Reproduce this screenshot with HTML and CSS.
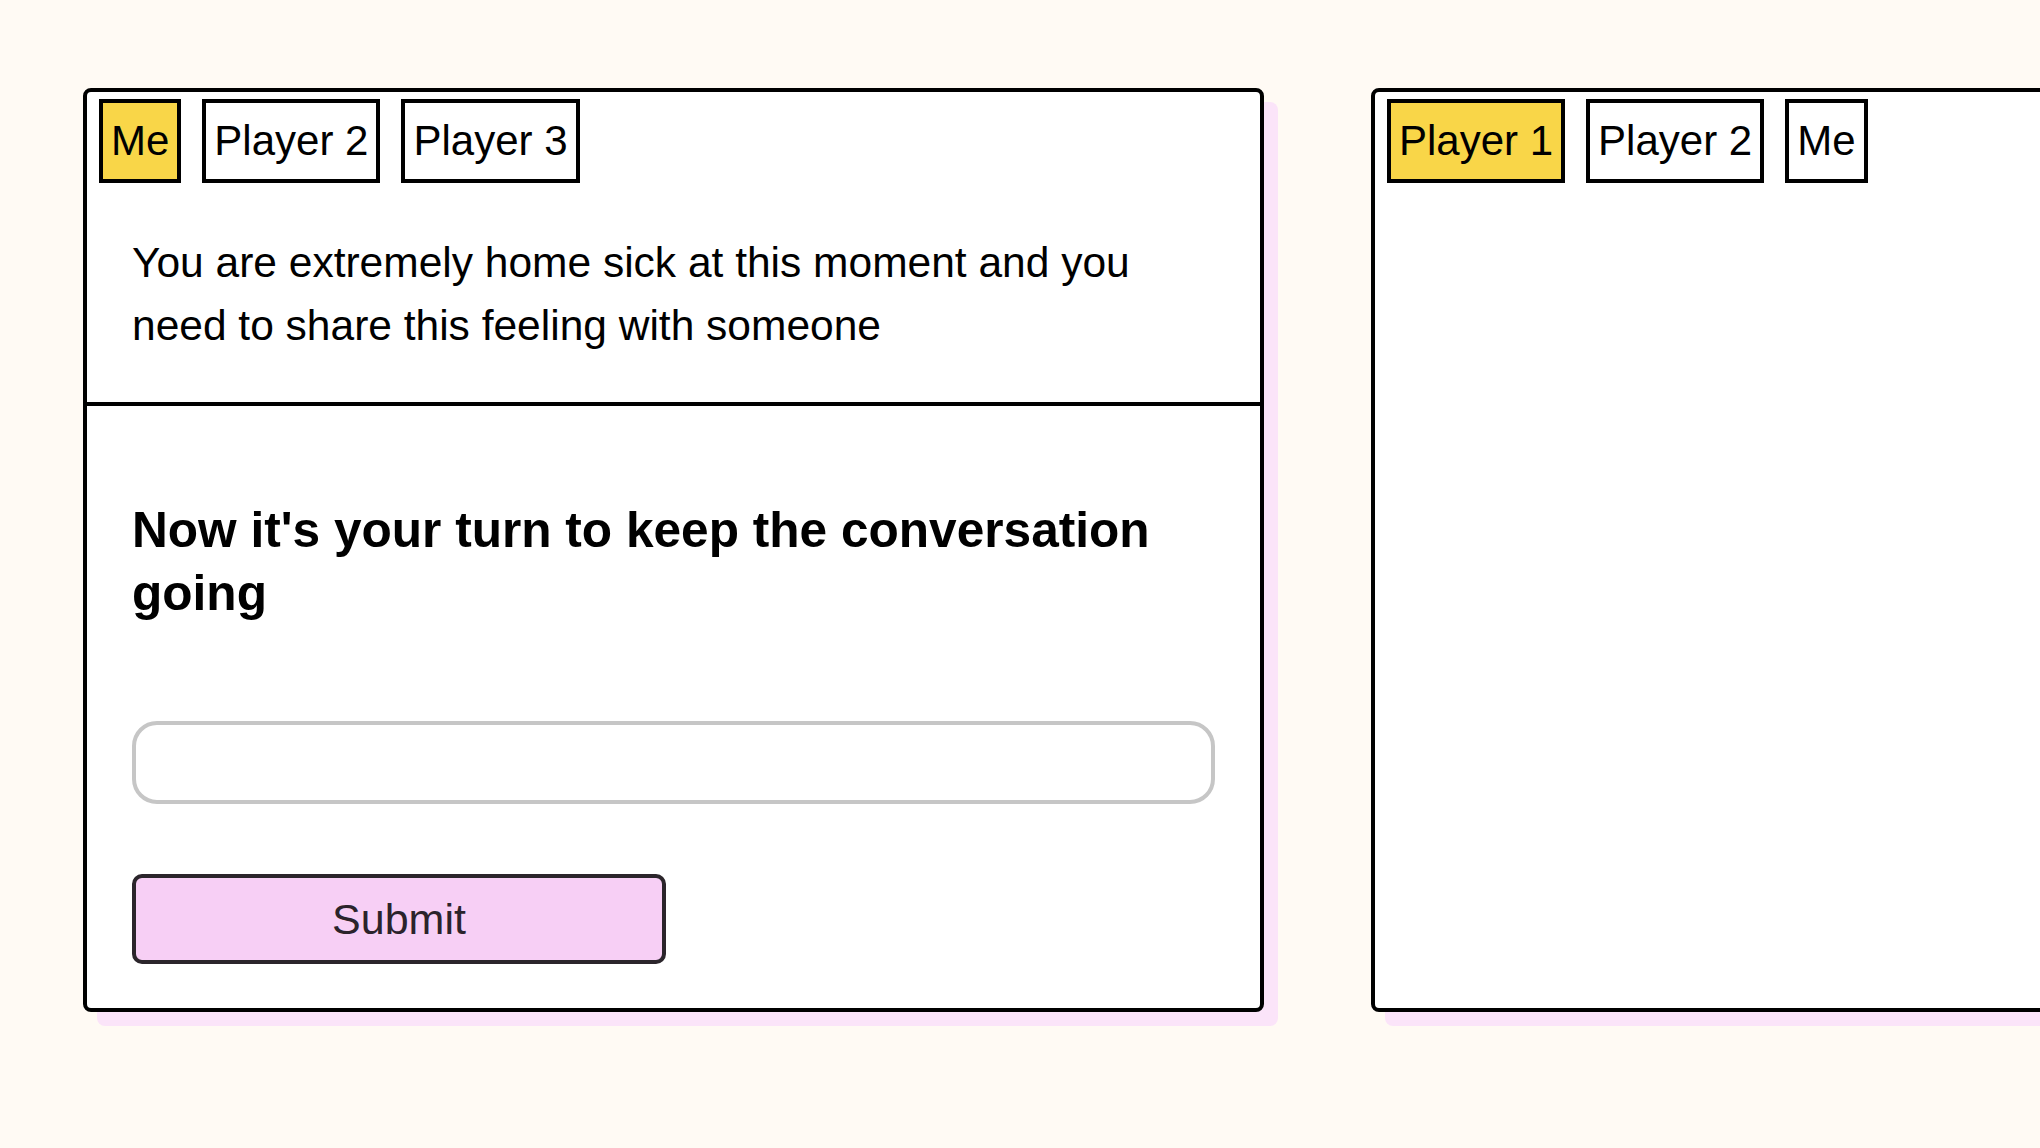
FILE: index.html
```html
<!DOCTYPE html>
<html lang="en">
<head>
<meta charset="utf-8">
<title>Conversation game</title>
<link rel="stylesheet" href="styles.css">
</head>
<body>
<main class="board">
  <section class="card">
    <div class="card-top">
      <div class="tabs">
        <span class="tab tab-active">Me</span>
        <span class="tab">Player 2</span>
        <span class="tab">Player 3</span>
      </div>
      <p class="prompt">You are extremely home sick at this moment and you need to share this feeling with someone</p>
    </div>
    <div class="card-bottom">
      <h2 class="turn-title">Now it's your turn to keep the conversation going</h2>
      <input class="reply" type="text" aria-label="Your reply">
      <button class="submit" type="button">Submit</button>
    </div>
  </section>
  <section class="card">
    <div class="card-top">
      <div class="tabs">
        <span class="tab tab-active">Player 1</span>
        <span class="tab">Player 2</span>
        <span class="tab">Me</span>
      </div>
    </div>
  </section>
</main>
</body>
</html>
```

FILE: styles.css
```css
* {
  box-sizing: border-box;
}

html, body {
  margin: 0;
  padding: 0;
  background: #fffaf4;
}

body {
  font-family: "Liberation Sans", Arial, Helvetica, sans-serif;
  color: #000;
  width: 2040px;
  height: 1148px;
  overflow: hidden;
}

.board {
  display: flex;
  gap: 107px;
  padding: 88px 0 0 83px;
  align-items: flex-start;
}

.card {
  flex: 0 0 1181px;
  width: 1181px;
  height: 924px;
  background: #fff;
  border: 4px solid #000;
  border-radius: 8px;
  box-shadow: 14px 14px 0 #fbe4f9;
  display: flex;
  flex-direction: column;
}

.tabs {
  display: flex;
  gap: 21px;
  padding: 7px 12px 0;
}

.tab {
  display: block;
  height: 84px;
  padding: 8px 8px;
  border: 4px solid #000;
  background: #fff;
  font-size: 42px;
  line-height: 60px;
  white-space: nowrap;
}

.tab-active {
  background: #f9d648;
}

.prompt {
  margin: 48px 45px 45px;
  font-size: 42.5px;
  line-height: 63px;
}

.card-bottom {
  border-top: 4px solid #000;
  padding: 93px 45px 0;
  display: flex;
  flex-direction: column;
  align-items: flex-start;
}

.turn-title {
  margin: 0;
  font-size: 49.6px;
  line-height: 63px;
  font-weight: 700;
}

.reply {
  margin-top: 96px;
  width: 100%;
  height: 83px;
  border: 4px solid #c6c6c6;
  border-radius: 25px;
  background: #fff;
  font: inherit;
  font-size: 40px;
  padding: 0 24px;
  outline: none;
}

.submit {
  margin-top: 70px;
  width: 534px;
  height: 90px;
  border: 4px solid #2b252b;
  border-radius: 10px;
  background: #f7cff5;
  color: #2b232b;
  font-family: "Liberation Sans", Arial, Helvetica, sans-serif;
  font-size: 43px;
  padding: 0;
  cursor: pointer;
}
```
